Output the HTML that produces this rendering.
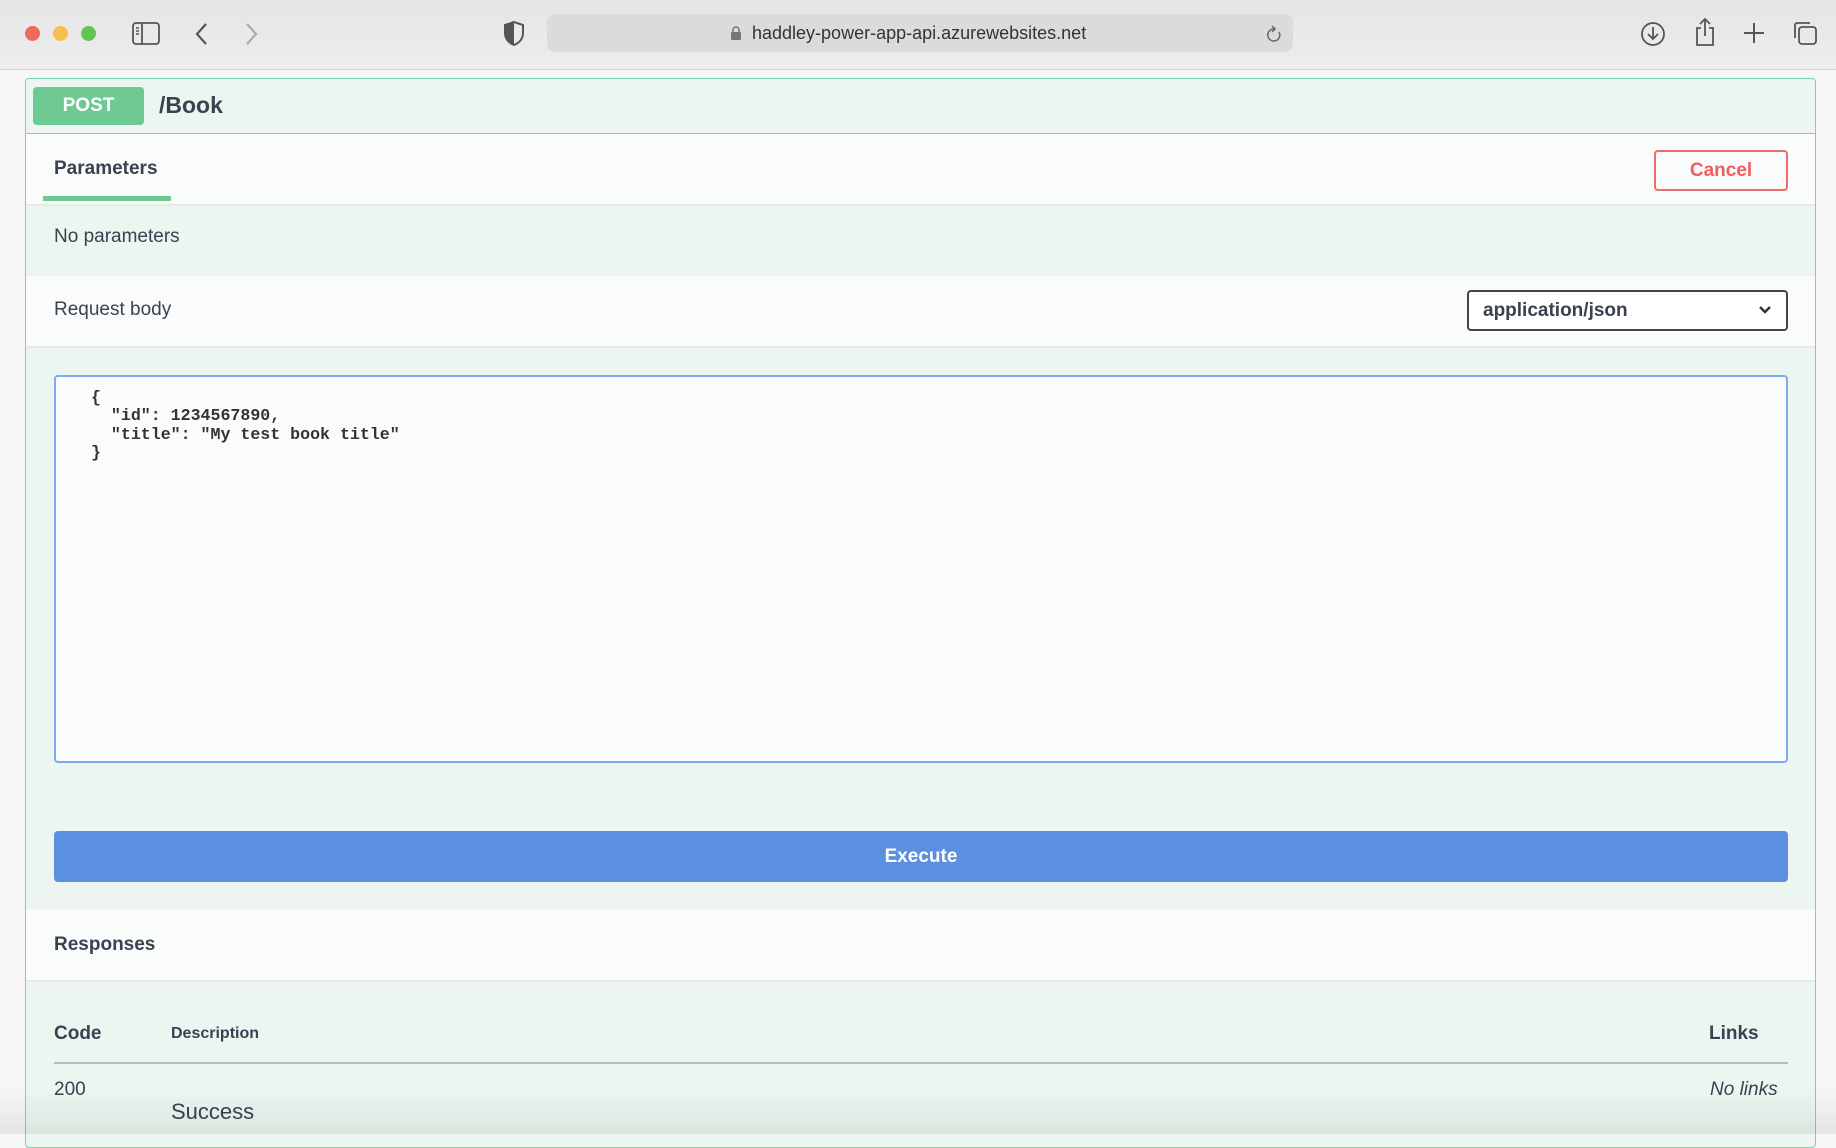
<!DOCTYPE html>
<html><head><meta charset="utf-8"><style>
*{margin:0;padding:0;box-sizing:border-box}
body{width:1836px;height:1134px;overflow:hidden;background:#f6f6f6;font-family:"Liberation Sans",sans-serif;color:#3b4151;position:relative}
.tb{position:absolute;left:0;top:0;width:1836px;height:70px;background:linear-gradient(#e6e5e5,#eeeded);border-bottom:1px solid #d6d6d6}
.dot{position:absolute;top:26px;width:15px;height:15px;border-radius:50%}
.url{position:absolute;left:547px;top:14px;width:746px;height:38px;background:#dcdbdb;border-radius:8px}
.url span{position:absolute;left:205px;top:9px;font-size:18px;color:#333}
.card{position:absolute;left:25px;top:78px;width:1791px;height:1070px;border:1.5px solid #7dd3a8;border-radius:4px;background:#ecf5ef;overflow:hidden}
.abs{position:absolute}
.sec{position:absolute;left:0;width:100%;background:#fafcfb;box-shadow:0 1px 2px rgba(0,0,0,.08)}
</style></head><body>
<div class="tb">
 <div class="dot" style="left:25px;background:#ee6a5f"></div>
 <div class="dot" style="left:53px;background:#f5bf4f"></div>
 <div class="dot" style="left:81px;background:#61c454"></div>
 <svg class="abs" style="left:132px;top:22px" width="28" height="24" viewBox="0 0 28 24"><rect x="1" y="1" width="26" height="21" rx="3" fill="none" stroke="#555" stroke-width="1.8"/><line x1="10" y1="1" x2="10" y2="22" stroke="#555" stroke-width="1.8"/><path d="M4 6h3M4 9h3M4 12h3" stroke="#555" stroke-width="1.4"/></svg>
 <svg class="abs" style="left:194px;top:21px" width="16" height="26"><path d="M12 3L3 13l9 10" fill="none" stroke="#555" stroke-width="2.2"/></svg>
 <svg class="abs" style="left:243px;top:21px" width="16" height="26"><path d="M4 3l9 10-9 10" fill="none" stroke="#aaa" stroke-width="2.2"/></svg>
 <svg class="abs" style="left:503px;top:20px" width="22" height="27" viewBox="0 0 22 27"><path d="M11 2L2 5v8c0 6 4 10 9 12 5-2 9-6 9-12V5z" fill="none" stroke="#555" stroke-width="2"/><path d="M11 2L2 5v8c0 6 4 10 9 12z" fill="#555"/></svg>
 <div class="url"><svg class="abs" style="left:183px;top:11px" width="12" height="16"><rect x="1" y="7" width="10" height="8" rx="1" fill="#777"/><path d="M3 7V5a3 3 0 016 0v2" fill="none" stroke="#777" stroke-width="1.6"/></svg><span>haddley-power-app-api.azurewebsites.net</span>
 <svg class="abs" style="left:720px;top:10px" width="16" height="20"><path d="M12 8a6 6 0 11-5-3" fill="none" stroke="#666" stroke-width="1.5"/><path d="M5 2l3 3-3 3" fill="none" stroke="#666" stroke-width="1.5"/></svg></div>
 <svg class="abs" style="left:1640px;top:21px" width="26" height="26"><circle cx="13" cy="13" r="11" fill="none" stroke="#555" stroke-width="1.8"/><path d="M13 6v12M8 13l5 5 5-5" fill="none" stroke="#555" stroke-width="1.8"/></svg>
 <svg class="abs" style="left:1693px;top:17px" width="24" height="30"><path d="M8 11H4v17h16V11h-4M12 2v17M7 7l5-5 5 5" fill="none" stroke="#555" stroke-width="1.8"/></svg>
 <svg class="abs" style="left:1743px;top:22px" width="22" height="22"><path d="M11 1v20M1 11h20" stroke="#555" stroke-width="2"/></svg>
 <svg class="abs" style="left:1792px;top:20px" width="26" height="26"><rect x="7" y="7" width="17" height="17" rx="3" fill="none" stroke="#555" stroke-width="1.8"/><path d="M3 18V5a2 2 0 012-2h13" fill="none" stroke="#555" stroke-width="1.8"/></svg>
</div>
<div class="card">
 <div class="abs" style="left:7px;top:8px;width:111px;height:38px;background:#6fc993;border-radius:4px;color:#fff;font-weight:bold;font-size:19px;text-align:center;line-height:38px">POST</div>
 <div class="abs" style="left:133px;top:13px;font-size:23px;font-weight:bold">/Book</div>
 <div class="sec" style="top:54px;height:71px;border-top:1.5px solid #7dd3a8">
  <div class="abs" style="left:28px;top:24px;font-size:19px;font-weight:bold">Parameters</div>
  <div class="abs" style="left:17px;top:62px;width:128px;height:5px;background:#6fc993"></div>
  <div class="abs" style="left:1628px;top:16px;width:134px;height:41px;border:2px solid #ef6a6a;border-radius:4px;color:#ef5d5d;font-weight:bold;font-size:19px;text-align:center;line-height:37px">Cancel</div>
 </div>
 <div class="abs" style="left:28px;top:147px;font-size:19px">No parameters</div>
 <div class="sec" style="top:197px;height:70px">
  <div class="abs" style="left:28px;top:23px;font-size:19px">Request body</div>
  <div class="abs" style="left:1441px;top:14px;width:321px;height:41px;border:2px solid #41444e;border-radius:4px;background:#fff;font-weight:bold;font-size:19px;padding:8px 14px">application/json
   <svg class="abs" style="right:14px;top:13px" width="14" height="10"><path d="M2 2l5 5 5-5" fill="none" stroke="#333" stroke-width="2.4"/></svg></div>
 </div>
 <div class="abs" style="left:28px;top:296px;width:1734px;height:388px;border:2px solid #7aabf0;border-radius:4px;background:#fafcfb;font-family:'Liberation Mono',monospace;font-weight:bold;font-size:16.6px;line-height:18.3px;padding:12px 0 0 35px;white-space:pre;color:#333">{
  "id": 1234567890,
  "title": "My test book title"
}</div>
 <div class="abs" style="left:28px;top:752px;width:1734px;height:51px;background:#5b8fdf;border-radius:4px;color:#fff;font-weight:bold;font-size:19px;text-align:center;line-height:51px">Execute</div>
 <div class="sec" style="top:830px;height:71px">
  <div class="abs" style="left:28px;top:25px;font-size:19px;font-weight:bold">Responses</div>
 </div>
 <div class="abs" style="left:28px;top:944px;font-size:19px;font-weight:bold">Code</div>
 <div class="abs" style="left:145px;top:946px;font-size:16px;font-weight:bold">Description</div>
 <div class="abs" style="left:1683px;top:944px;font-size:19px;font-weight:bold">Links</div>
 <div class="abs" style="left:28px;top:983px;width:1734px;height:2px;background:#b8bcbd"></div>
 <div class="abs" style="left:28px;top:1000px;font-size:19px">200</div>
 <div class="abs" style="left:145px;top:1020px;font-size:22px">Success</div>
 <div class="abs" style="left:1684px;top:1000px;font-size:19px;font-style:italic">No links</div>
</div>
<div class="abs" style="left:0;top:1090px;width:1836px;height:44px;background:linear-gradient(rgba(0,0,0,0),rgba(0,0,0,.07))"></div>
</body></html>
